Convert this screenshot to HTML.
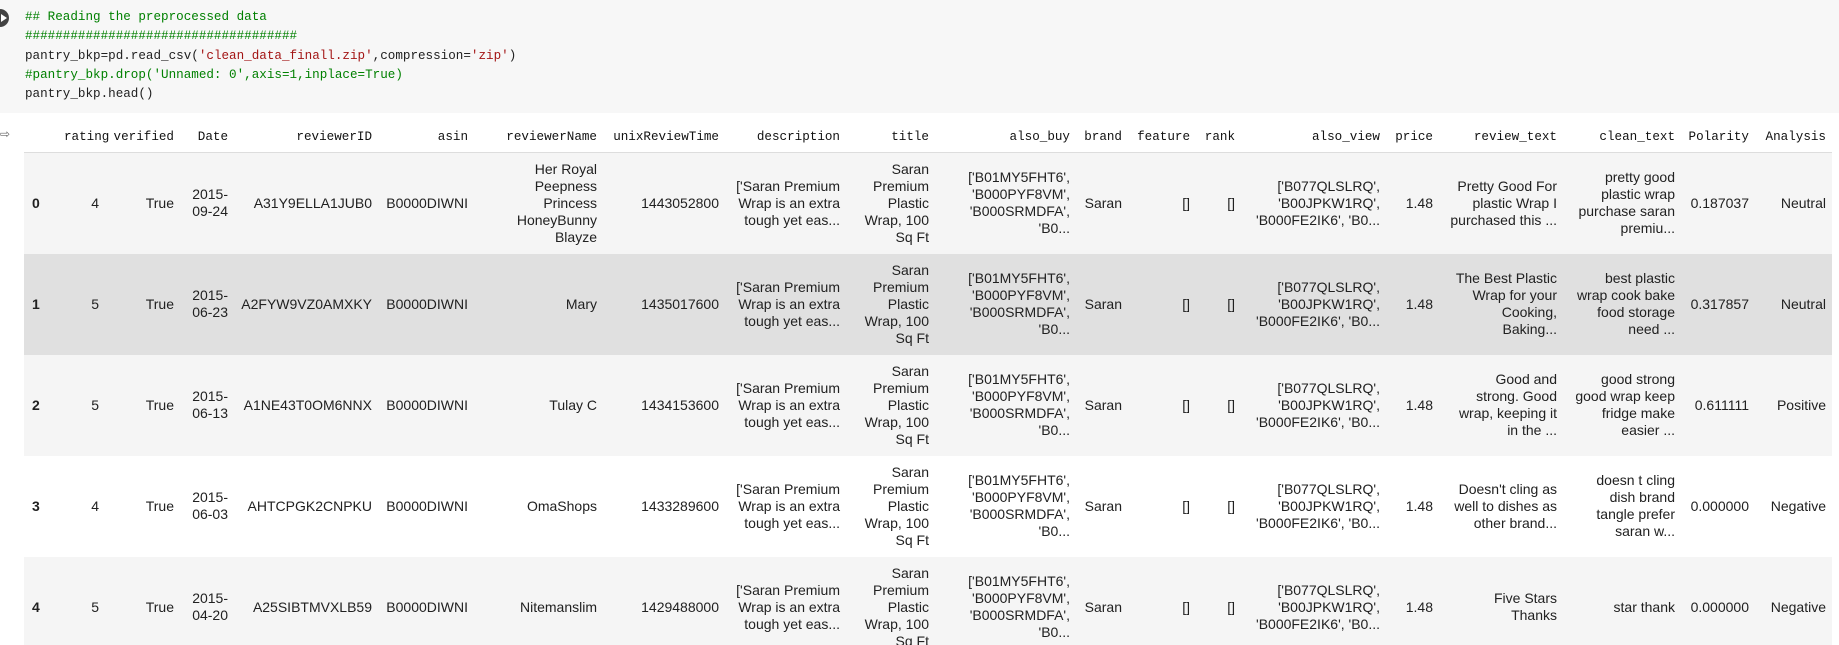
<!DOCTYPE html>
<html><head><meta charset="utf-8"><style>
html,body{margin:0;padding:0;background:#fff;width:1839px;height:645px;overflow:hidden;position:relative}
.code{position:absolute;left:0;top:0;width:1839px;height:113px;background:#f7f7f7}
.code pre{position:absolute;left:25px;top:8px;margin:0;font-family:"Liberation Mono",monospace;font-size:12.6px;line-height:19.3px;color:#212121}
.c{color:#008000}.s{color:#a31515}
.run{position:absolute;left:-9px;top:9px;width:18px;height:18px;border-radius:50%;background:#424242}
.run:after{content:"";position:absolute;left:10px;top:5px;border-left:6px solid #fff;border-top:4px solid transparent;border-bottom:4px solid transparent}
.oi{position:absolute;left:0;top:127px;font-size:12px;color:#666;font-family:"DejaVu Sans",sans-serif}
table{position:absolute;left:24px;top:114px;border-collapse:collapse;table-layout:fixed;width:1808px}
th,td{padding:0 6px 0 0;text-align:right;white-space:nowrap;overflow:visible}
th{font-family:"Liberation Mono",monospace;font-size:12.6px;font-weight:normal;color:#111;height:38px;border-bottom:1px solid #ddd;vertical-align:middle;padding-top:8px;box-sizing:border-box}
td{font-family:"Liberation Sans",Arial,sans-serif;font-size:14px;line-height:17px;color:#212121;height:101px;vertical-align:middle}
td.i{text-align:left;padding-left:8px;font-weight:bold}
tr.a td{background:#f5f5f5}
tr.h td{background:#e0e0e0}
</style></head><body>
<div class="code"><div class="run"></div><pre><span class="c">## Reading the preprocessed data</span>
<span class="c">####################################</span>
pantry_bkp=pd.read_csv(<span class="s">'clean_data_finall.zip'</span>,compression=<span class="s">'zip'</span>)
<span class="c">#pantry_bkp.drop('Unnamed: 0',axis=1,inplace=True)</span>
pantry_bkp.head()</pre></div>
<div class="oi">⇨</div>
<table>
<colgroup><col style="width:40px"><col style="width:41px"><col style="width:75px"><col style="width:54px"><col style="width:144px"><col style="width:96px"><col style="width:129px"><col style="width:122px"><col style="width:121px"><col style="width:89px"><col style="width:141px"><col style="width:52px"><col style="width:68px"><col style="width:45px"><col style="width:145px"><col style="width:53px"><col style="width:124px"><col style="width:118px"><col style="width:74px"><col style="width:77px"></colgroup>
<tr><th></th><th>rating</th><th>verified</th><th>Date</th><th>reviewerID</th><th>asin</th><th>reviewerName</th><th>unixReviewTime</th><th>description</th><th>title</th><th>also_buy</th><th>brand</th><th>feature</th><th>rank</th><th>also_view</th><th>price</th><th>review_text</th><th>clean_text</th><th>Polarity</th><th>Analysis</th></tr>
<tr class="a"><td class="i">0</td><td>4</td><td>True</td><td>2015-<br>09-24</td><td>A31Y9ELLA1JUB0</td><td>B0000DIWNI</td><td>Her Royal<br>Peepness<br>Princess<br>HoneyBunny<br>Blayze</td><td>1443052800</td><td>['Saran Premium<br>Wrap is an extra<br>tough yet eas...</td><td>Saran<br>Premium<br>Plastic<br>Wrap, 100<br>Sq Ft</td><td>['B01MY5FHT6',<br>'B000PYF8VM',<br>'B000SRMDFA',<br>'B0...</td><td>Saran</td><td>[]</td><td>[]</td><td>['B077QLSLRQ',<br>'B00JPKW1RQ',<br>'B000FE2IK6', 'B0...</td><td>1.48</td><td>Pretty Good For<br>plastic Wrap I<br>purchased this ...</td><td>pretty good<br>plastic wrap<br>purchase saran<br>premiu...</td><td>0.187037</td><td>Neutral</td></tr>
<tr class="h"><td class="i">1</td><td>5</td><td>True</td><td>2015-<br>06-23</td><td>A2FYW9VZ0AMXKY</td><td>B0000DIWNI</td><td>Mary</td><td>1435017600</td><td>['Saran Premium<br>Wrap is an extra<br>tough yet eas...</td><td>Saran<br>Premium<br>Plastic<br>Wrap, 100<br>Sq Ft</td><td>['B01MY5FHT6',<br>'B000PYF8VM',<br>'B000SRMDFA',<br>'B0...</td><td>Saran</td><td>[]</td><td>[]</td><td>['B077QLSLRQ',<br>'B00JPKW1RQ',<br>'B000FE2IK6', 'B0...</td><td>1.48</td><td>The Best Plastic<br>Wrap for your<br>Cooking,<br>Baking...</td><td>best plastic<br>wrap cook bake<br>food storage<br>need ...</td><td>0.317857</td><td>Neutral</td></tr>
<tr class="a"><td class="i">2</td><td>5</td><td>True</td><td>2015-<br>06-13</td><td>A1NE43T0OM6NNX</td><td>B0000DIWNI</td><td>Tulay C</td><td>1434153600</td><td>['Saran Premium<br>Wrap is an extra<br>tough yet eas...</td><td>Saran<br>Premium<br>Plastic<br>Wrap, 100<br>Sq Ft</td><td>['B01MY5FHT6',<br>'B000PYF8VM',<br>'B000SRMDFA',<br>'B0...</td><td>Saran</td><td>[]</td><td>[]</td><td>['B077QLSLRQ',<br>'B00JPKW1RQ',<br>'B000FE2IK6', 'B0...</td><td>1.48</td><td>Good and<br>strong. Good<br>wrap, keeping it<br>in the ...</td><td>good strong<br>good wrap keep<br>fridge make<br>easier ...</td><td>0.611111</td><td>Positive</td></tr>
<tr><td class="i">3</td><td>4</td><td>True</td><td>2015-<br>06-03</td><td>AHTCPGK2CNPKU</td><td>B0000DIWNI</td><td>OmaShops</td><td>1433289600</td><td>['Saran Premium<br>Wrap is an extra<br>tough yet eas...</td><td>Saran<br>Premium<br>Plastic<br>Wrap, 100<br>Sq Ft</td><td>['B01MY5FHT6',<br>'B000PYF8VM',<br>'B000SRMDFA',<br>'B0...</td><td>Saran</td><td>[]</td><td>[]</td><td>['B077QLSLRQ',<br>'B00JPKW1RQ',<br>'B000FE2IK6', 'B0...</td><td>1.48</td><td>Doesn't cling as<br>well to dishes as<br>other brand...</td><td>doesn t cling<br>dish brand<br>tangle prefer<br>saran w...</td><td>0.000000</td><td>Negative</td></tr>
<tr class="a"><td class="i">4</td><td>5</td><td>True</td><td>2015-<br>04-20</td><td>A25SIBTMVXLB59</td><td>B0000DIWNI</td><td>Nitemanslim</td><td>1429488000</td><td>['Saran Premium<br>Wrap is an extra<br>tough yet eas...</td><td>Saran<br>Premium<br>Plastic<br>Wrap, 100<br>Sq Ft</td><td>['B01MY5FHT6',<br>'B000PYF8VM',<br>'B000SRMDFA',<br>'B0...</td><td>Saran</td><td>[]</td><td>[]</td><td>['B077QLSLRQ',<br>'B00JPKW1RQ',<br>'B000FE2IK6', 'B0...</td><td>1.48</td><td>Five Stars<br>Thanks</td><td>star thank</td><td>0.000000</td><td>Negative</td></tr>
</table>
</body></html>
